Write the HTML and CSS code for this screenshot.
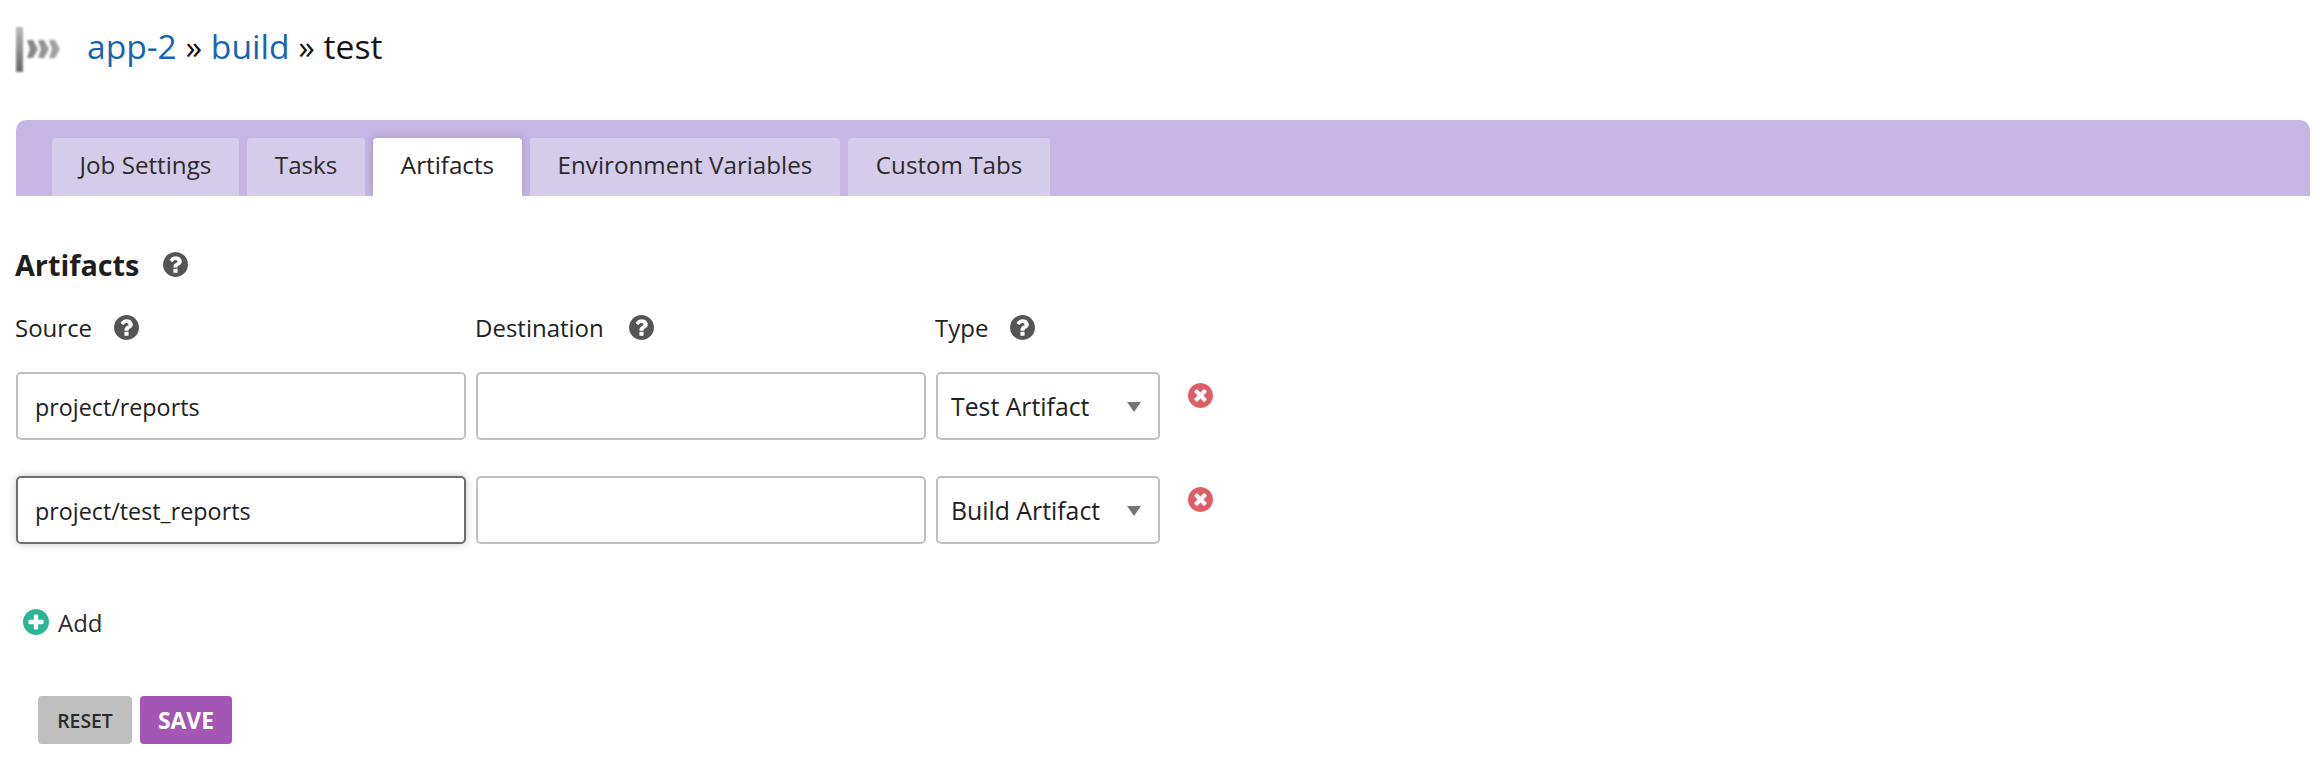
FILE: index.html
```html
<!DOCTYPE html>
<html lang="en">
<head>
<meta charset="utf-8">
<title>test</title>
<link rel="stylesheet" href="styles.css">
</head>
<body>
<svg class="sprite" aria-hidden="true">
  <defs>
    <symbol id="i-help" viewBox="128 128 1536 1536"><path d="M1024 1376v-192q0-14-9-23t-23-9h-192q-14 0-23 9t-9 23v192q0 14 9 23t23 9h192q14 0 23-9t9-23zm256-672q0-88-55.500-163t-138.500-116-170-41q-243 0-371 213-15 24 8 42l132 100q7 6 19 6 16 0 25-12 53-68 86-92 34-24 86-24 48 0 85.500 26t37.500 59q0 38-20 61t-68 45q-63 28-115.500 86.500t-52.500 125.500v36q0 14 9 23t23 9h192q14 0 23-9t9-23q0-19 21.500-49.500t54.500-49.500q32-18 49-28.500t46-35 44.500-48 28-60.500 12.500-81zm384 192q0 209-103 385.500t-279.500 279.500-385.500 103-385.500-103-279.500-279.500-103-385.500 103-385.500 279.500-279.500 385.500-103 385.500 103 279.500 279.500 103 385.500z"/></symbol>
    <symbol id="i-remove" viewBox="128 128 1536 1536"><path d="M1277 1122q0-26-19-45l-181-181 181-181q19-19 19-45 0-27-19-46l-90-90q-19-19-46-19-26 0-45 19l-181 181-181-181q-19-19-45-19-27 0-46 19l-90 90q-19 19-19 46 0 26 19 45l181 181-181 181q-19 19-19 45 0 27 19 46l90 90q19 19 46 19 26 0 45-19l181-181 181 181q19 19 45 19 27 0 46-19l90-90q19-19 19-46zm387-226q0 209-103 385.500t-279.500 279.500-385.500 103-385.500-103-279.500-279.500-103-385.500 103-385.500 279.500-279.500 385.500-103 385.500 103 279.500 279.500 103 385.500z"/></symbol>
    <symbol id="i-add" viewBox="128 128 1536 1536"><path d="M1344 960v-128q0-26-19-45t-45-19h-256v-256q0-26-19-45t-45-19h-128q-26 0-45 19t-19 45v256h-256q-26 0-45 19t-19 45v128q0 26 19 45t45 19h256v256q0 26 19 45t45 19h128q26 0 45-19t19-45v-256h256q26 0 45-19t19-45zm320-64q0 209-103 385.500t-279.500 279.500-385.500 103-385.500-103-279.500-279.500-103-385.500 103-385.500 279.500-279.500 385.500-103 385.500 103 279.500 279.500 103 385.500z"/></symbol>
  </defs>
</svg>

<header class="crumbs">
  <svg class="logo" width="46" height="50" viewBox="0 0 46 50" aria-hidden="true">
    <defs>
      <linearGradient id="barFill" x1="0" y1="0" x2="0" y2="1">
        <stop offset="0" stop-color="#b8b8b8"/>
        <stop offset="1" stop-color="#666666"/>
      </linearGradient>
      <linearGradient id="chevFill" x1="0" y1="0" x2="1" y2="0">
        <stop offset="0" stop-color="#808080"/>
        <stop offset="1" stop-color="#a8a8a8"/>
      </linearGradient>
      <filter id="soft" x="-20%" y="-20%" width="140%" height="140%"><feGaussianBlur stdDeviation="0.8"/></filter>
    </defs>
    <g filter="url(#soft)">
      <rect x="1" y="3" width="7" height="45" fill="url(#barFill)"/>
      <path d="M12 16h6l5 9-5 9h-6l3-9z M23 16h6l5 9-5 9h-6l3-9z M34 16h6l5 9-5 9h-6l3-9z" fill="url(#chevFill)"/>
    </g>
  </svg>
  <h1 class="crumb-text"><a href="#">app-2</a> » <a href="#">build</a> » test</h1>
</header>

<nav class="tabbar">
  <a class="tab" href="#">Job Settings</a>
  <a class="tab" href="#">Tasks</a>
  <a class="tab tab-active" href="#">Artifacts</a>
  <a class="tab" href="#">Environment Variables</a>
  <a class="tab" href="#">Custom Tabs</a>
</nav>

<main class="content">
  <h2 class="section-title">Artifacts
    <svg class="icon help help-title" aria-hidden="true"><use href="#i-help"/></svg>
  </h2>

  <div class="grid">
    <div class="label">Source <svg class="icon help" aria-hidden="true"><use href="#i-help"/></svg></div>
    <div class="label label-wide">Destination <svg class="icon help" aria-hidden="true"><use href="#i-help"/></svg></div>
    <div class="label">Type <svg class="icon help" aria-hidden="true"><use href="#i-help"/></svg></div>
    <div></div>

    <input class="field" type="text" value="project/reports">
    <input class="field" type="text" value="">
    <div class="select-wrap"><select class="select"><option>Test Artifact</option><option>Build Artifact</option></select></div>
    <svg class="icon remove" aria-hidden="true"><use href="#i-remove"/></svg>

    <input class="field field-focus" type="text" value="project/test_reports">
    <input class="field" type="text" value="">
    <div class="select-wrap"><select class="select"><option>Build Artifact</option><option>Test Artifact</option></select></div>
    <svg class="icon remove" aria-hidden="true"><use href="#i-remove"/></svg>
  </div>

  <a class="add" href="#">
    <svg class="icon add-icon" aria-hidden="true"><use href="#i-add"/></svg>
    Add
  </a>

  <div class="actions">
    <button class="btn btn-reset" type="button">RESET</button>
    <button class="btn btn-save" type="button">SAVE</button>
  </div>
</main>
</body>
</html>
```

FILE: styles.css
```css
* { box-sizing: border-box; }

html, body { margin: 0; background: #fff; }

body {
  height: 768px;
  overflow: hidden;
  font-family: "Open Sans", "Noto Sans", sans-serif;
  color: #212121;
}

a { text-decoration: none; color: inherit; }

.sprite { display: none; }

.crumbs {
  display: flex;
  align-items: center;
  height: 50px;
  margin-top: 24px;
  padding-left: 15px;
}

.logo { flex: none; }

.crumb-text {
  margin: -7px 0 0 26px;
  font-size: 33.600px;
  font-weight: 400;
  line-height: 44px;
  color: #141414;
}

.crumb-text a { color: #1565b4; }

.tabbar {
  display: flex;
  gap: 8.500px;
  height: 76px;
  margin: 46px 10px 0 16px;
  padding: 18px 0 0 36px;
  overflow: hidden;
  background: #c6b6e3;
  border-radius: 10px 10px 0 0;
}

.tab {
  display: flex;
  align-items: center;
  justify-content: center;
  padding: 0 27.500px 4px;
  height: 58px;
  background: #d5cbeb;
  border-radius: 4px 4px 0 0;
  font-size: 24.200px;
  color: #2b2b2b;
  line-height: 1;
}

.tab-active {
  background: #fff;
  color: #212121;
  box-shadow: 0 0 8px rgba(90, 60, 140, .3);
}

.content { padding-left: 15px; }

.section-title {
  display: flex;
  align-items: center;
  height: 36px;
  margin: 50px 0 0;
  font-size: 28.800px;
  font-weight: 700;
  color: #1e1e1e;
}

.icon { display: block; flex: none; }

.help {
  width: 25px;
  height: 25px;
  margin-left: 22px;
  fill: #555;
}

.help-title { margin-left: 24px; }

.label-wide .help { margin-left: 25px; }

.grid {
  display: grid;
  grid-template-columns: 450px 450px 224px 80px;
  grid-template-rows: 18px 68px 68px;
  column-gap: 10px;
  row-gap: 36px;
  width: max-content;
  margin-top: 36px;
  margin-left: 1px;
}

.label {
  display: flex;
  align-items: center;
  margin-left: -1px;
  font-size: 24px;
  color: #212121;
}

.field, .select {
  width: 100%;
  height: 68px;
  background: #fff;
  border: 2px solid #c0c0c0;
  border-radius: 5px;
  font-family: inherit;
  color: #212121;
  outline: none;
}

.field {
  padding: 2px 17px 0;
  font-size: 23.300px;
}

.field-focus {
  border-color: #6e6e6e;
  box-shadow: 0 0 8px rgba(0, 0, 0, .22);
}

.select-wrap { position: relative; height: 68px; }

.select {
  padding: 0 40px 0 13px;
  font-size: 24.800px;
  appearance: none;
  -webkit-appearance: none;
}

.select-wrap::after {
  content: "";
  position: absolute;
  top: 30px;
  right: 19px;
  border-left: 7px solid transparent;
  border-right: 7px solid transparent;
  border-top: 10px solid #757575;
  pointer-events: none;
}

.remove {
  width: 25px;
  height: 25px;
  margin: 11px 0 0 18px;
  fill: #dc5f66;
}

.add {
  display: flex;
  align-items: center;
  gap: 9px;
  width: max-content;
  height: 36px;
  margin: 60px 0 0 8px;
  font-size: 24px;
  color: #2b2b2b;
}

.add-icon {
  width: 26px;
  height: 26px;
  fill: #2bb594;
}

.actions {
  display: flex;
  gap: 8px;
  margin: 56px 0 0 23px;
}

.btn {
  height: 48px;
  border: 0;
  border-radius: 4px;
  font-family: inherit;
  padding: 0;
}

.btn-reset {
  width: 94px;
  background: #bfbfbf;
  color: #2b2b2b;
  font-size: 19.400px;
  font-weight: 600;
}

.btn-save {
  width: 92px;
  background: #a356b3;
  color: #fff;
  font-size: 22.800px;
  font-weight: 700;
}
```
